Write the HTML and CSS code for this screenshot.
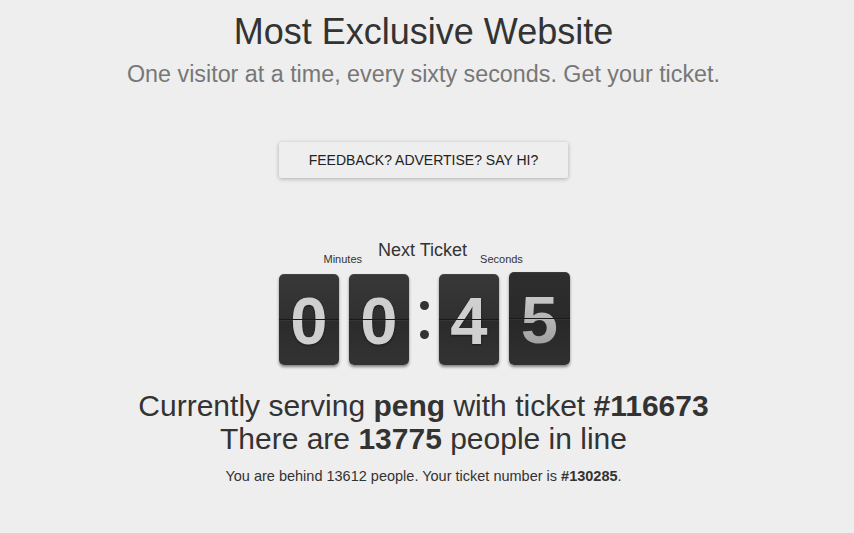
FILE: index.html
```html
<!DOCTYPE html>
<html>
<head>
<meta charset="utf-8">
<link rel="stylesheet" href="styles.css">
</head>
<body>
<div class="page">
  <h1 class="title">Most Exclusive Website</h1>
  <p class="subtitle">One visitor at a time, every sixty seconds. Get your ticket.</p>
  <a class="btn" href="#">FEEDBACK? ADVERTISE? SAY HI?</a>

  <div class="timer">
    <div class="timer-head">
      <span class="label label-min">Minutes</span>
      <span class="next">Next Ticket</span>
      <span class="label label-sec">Seconds</span>
    </div>
    <div class="clock">
      <div class="card"><span class="digit">0</span></div>
      <div class="card"><span class="digit">0</span></div>
      <div class="colon"><i></i><i></i></div>
      <div class="card"><span class="digit">4</span></div>
      <div class="card card-flip"><span class="digit">5</span></div>
    </div>
  </div>

  <div class="status">
    <p class="line">Currently serving <b>peng</b> with ticket <b>#116673</b></p>
    <p class="line">There are <b>13775</b> people in line</p>
  </div>
  <p class="note">You are behind 13612 people. Your ticket number is <b>#130285</b>.</p>
</div>
</body>
</html>
```

FILE: styles.css
```css
html, body {
  margin: 0;
  padding: 0;
  background: #eeeeee;
}
body {
  font-family: "Liberation Sans", Arial, sans-serif;
  color: #333333;
}
.page {
  display: flex;
  flex-direction: column;
  align-items: center;
  text-align: center;
  padding-right: 7px;
}
.title {
  margin: 10px 0 0;
  font-size: 36px;
  font-weight: normal;
  line-height: 44px;
  color: #333;
}
.subtitle {
  margin: 6px 0 0;
  font-size: 23.3px;
  line-height: 28px;
  color: #777;
}
.btn {
  margin-top: 54px;
  width: 289px;
  height: 36px;
  box-sizing: border-box;
  display: flex;
  align-items: center;
  justify-content: center;
  background: #eeeeee;
  color: #222;
  font-size: 14px;
  text-decoration: none;
  border-radius: 2px;
  box-shadow: 0 1px 4px rgba(0,0,0,0.28);
}
.timer {
  margin-top: 65px;
  display: flex;
  flex-direction: column;
  align-items: center;
  padding-left: 2px;
}
.timer-head {
  display: flex;
  align-items: flex-end;
  width: 300px;
  height: 28px;
}
.label {
  font-size: 11px;
  line-height: 13px;
  color: #333;
  margin-bottom: 5px;
}
.label-min { margin-left: 49px; }
.label-sec { margin-left: 13px; }
.next {
  margin-left: 16px;
  font-size: 18px;
  line-height: 20px;
  color: #333;
  margin-bottom: 11px;
}
.clock {
  display: flex;
  align-items: center;
  gap: 10px;
  margin-top: 3px;
}
.card {
  position: relative;
  width: 60px;
  height: 91px;
  border-radius: 5px;
  background: linear-gradient(#383838, #303030 48%, #2b2b2b 52%, #333 100%);
  box-shadow: 0 2px 3px rgba(0,0,0,0.45), inset 0 1px 0 rgba(255,255,255,0.06);
  display: flex;
  align-items: center;
  justify-content: center;
  overflow: hidden;
}
.card::after {
  content: "";
  position: absolute;
  left: 0;
  right: 0;
  top: 45px;
  height: 1px;
  background: #1a1a1a;
  box-shadow: 0 1px 0 rgba(255,255,255,0.05);
}
.digit {
  font-size: 67px;
  font-weight: bold;
  line-height: 1;
  color: #cfcfcf;
  text-shadow: 0 1px 2px rgba(0,0,0,0.5);
  margin-top: 2px;
}
.card-flip {
  height: 93px;
  margin-top: -2px;
  width: 61px;
  background: linear-gradient(#2e2e2e, #2a2a2a 48%, #282828 52%, #303030 100%);
}
.card-flip .digit {
  color: #b8b8b8;
  background: linear-gradient(#d0d0d0, #9a9a9a);
  -webkit-background-clip: text;
  background-clip: text;
  -webkit-text-fill-color: transparent;
  text-shadow: none;
}
.card-flip::after {
  top: 46px;
}
.colon {
  width: 10px;
  height: 91px;
  display: flex;
  flex-direction: column;
  align-items: center;
  justify-content: center;
  gap: 20px;
}
.colon i {
  display: block;
  width: 9px;
  height: 9px;
  border-radius: 50%;
  background: #333;
}
.status {
  margin-top: 24px;
}
.line {
  margin: 0;
  font-size: 30px;
  line-height: 33px;
  color: #333;
}
.note {
  margin: 13px 0 0;
  font-size: 14.5px;
  line-height: 16px;
  color: #333;
}
```
